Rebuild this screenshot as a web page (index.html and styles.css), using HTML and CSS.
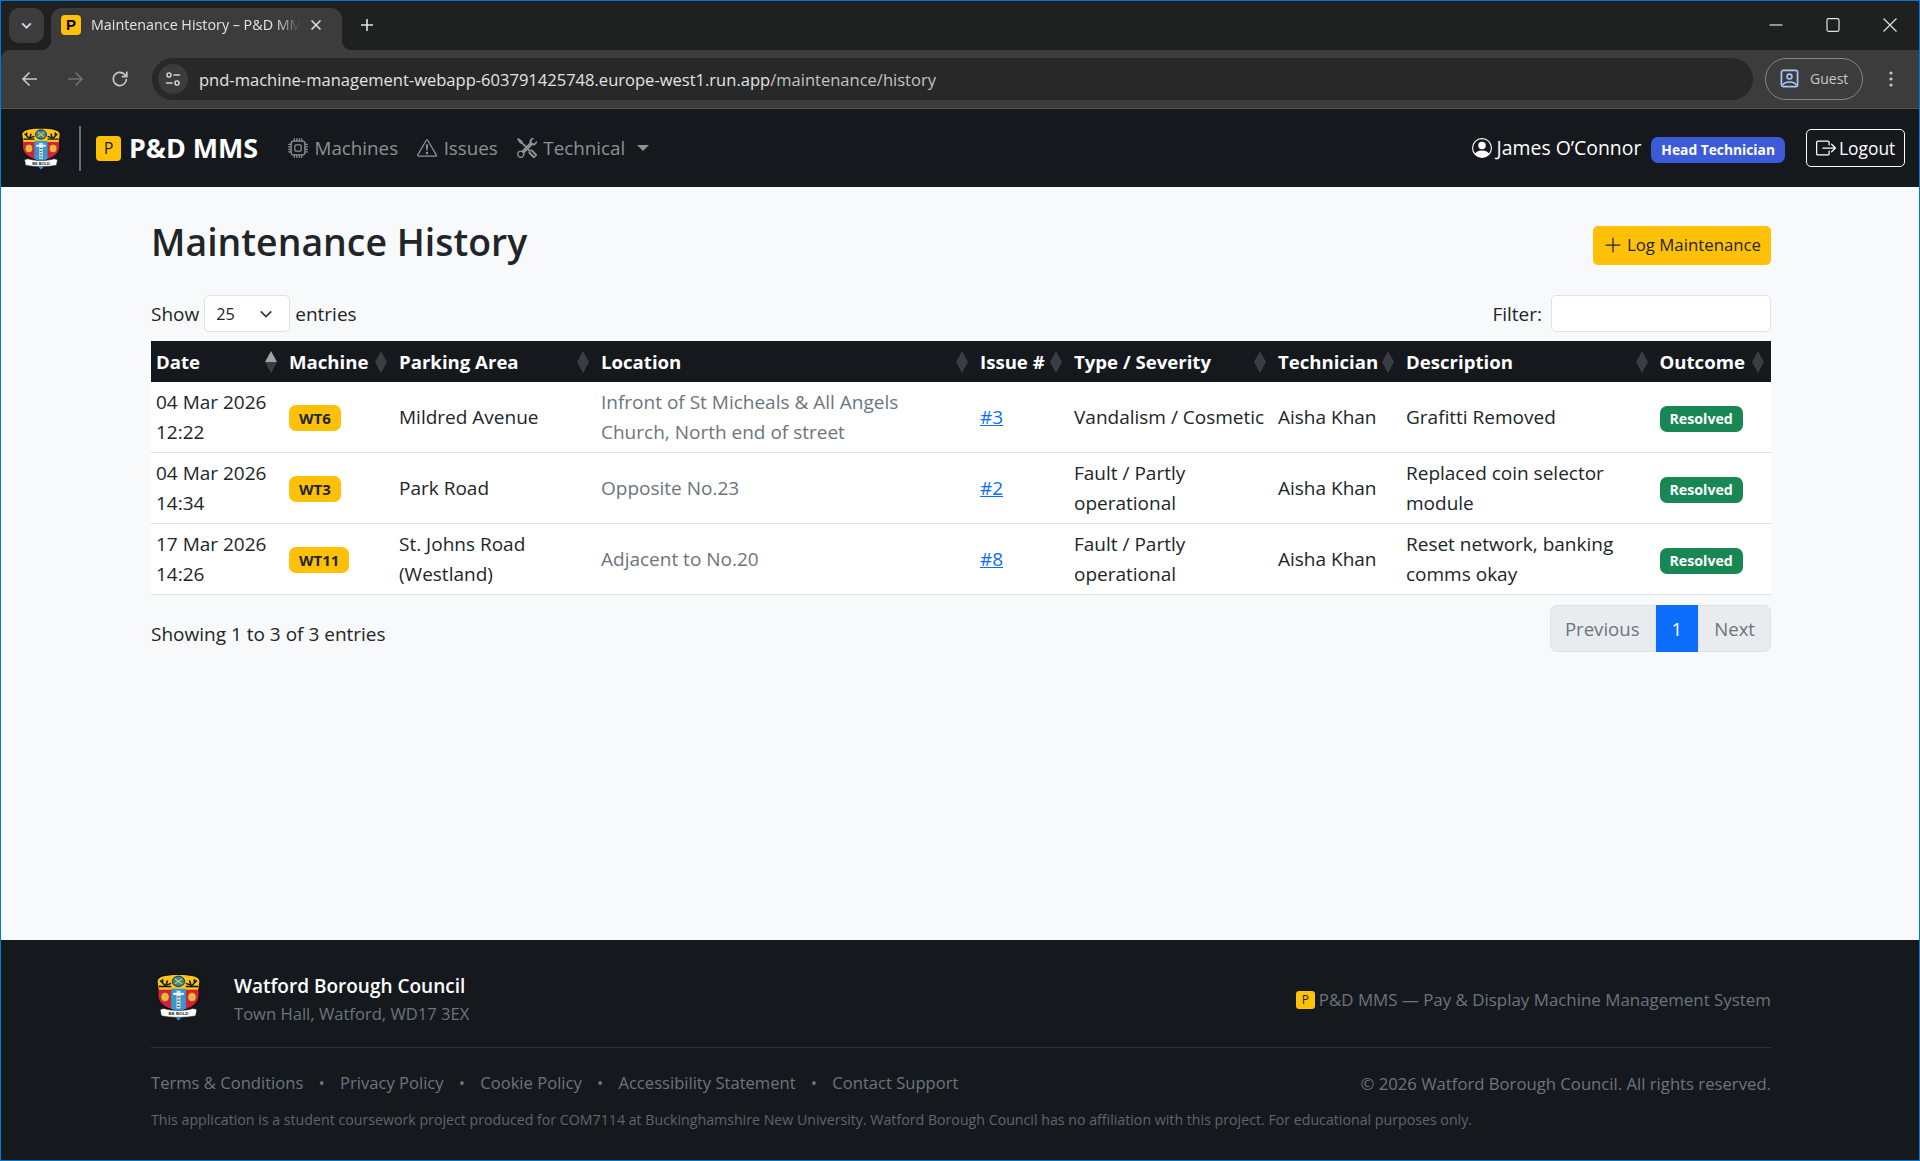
FILE: index.html
```html
<!DOCTYPE html>
<html lang="en">
<head>
    <meta charset="UTF-8">
    <meta name="viewport" content="width=device-width, initial-scale=1.0">
    <title>Maintenance History – P&amp;D MMS</title>
    <link rel="stylesheet" href="styles.css">
</head>
<body>
    <!-- Icon sprite -->
    <svg class="sprite" aria-hidden="true">
        <symbol id="i-cpu" viewBox="0 0 16 16"><path d="M5 0a.5.5 0 0 1 .5.5V2h1V.5a.5.5 0 0 1 1 0V2h1V.5a.5.5 0 0 1 1 0V2h1V.5a.5.5 0 0 1 1 0V2A2.5 2.5 0 0 1 14 4.5h1.5a.5.5 0 0 1 0 1H14v1h1.5a.5.5 0 0 1 0 1H14v1h1.5a.5.5 0 0 1 0 1H14v1h1.5a.5.5 0 0 1 0 1H14a2.5 2.5 0 0 1-2.5 2.5v1.5a.5.5 0 0 1-1 0V14h-1v1.5a.5.5 0 0 1-1 0V14h-1v1.5a.5.5 0 0 1-1 0V14h-1v1.5a.5.5 0 0 1-1 0V14A2.5 2.5 0 0 1 2 11.5H.5a.5.5 0 0 1 0-1H2v-1H.5a.5.5 0 0 1 0-1H2v-1H.5a.5.5 0 0 1 0-1H2v-1H.5a.5.5 0 0 1 0-1H2A2.5 2.5 0 0 1 4.5 2V.5A.5.5 0 0 1 5 0m-.5 3A1.5 1.5 0 0 0 3 4.5v7A1.5 1.5 0 0 0 4.5 13h7a1.5 1.5 0 0 0 1.5-1.5v-7A1.5 1.5 0 0 0 11.5 3zM5 6.5A1.5 1.5 0 0 1 6.5 5h3A1.5 1.5 0 0 1 11 6.5v3A1.5 1.5 0 0 1 9.5 11h-3A1.5 1.5 0 0 1 5 9.5zM6.5 6a.5.5 0 0 0-.5.5v3a.5.5 0 0 0 .5.5h3a.5.5 0 0 0 .5-.5v-3a.5.5 0 0 0-.5-.5z"/></symbol>
        <symbol id="i-warn" viewBox="0 0 16 16"><path d="M7.938 2.016A.13.13 0 0 1 8.002 2a.13.13 0 0 1 .063.016.15.15 0 0 1 .054.057l6.857 11.667c.036.06.035.124.002.183a.2.2 0 0 1-.054.06.1.1 0 0 1-.066.017H1.146a.1.1 0 0 1-.066-.017.2.2 0 0 1-.054-.06.18.18 0 0 1 .002-.183L7.884 2.073a.15.15 0 0 1 .054-.057m1.044-.45a1.13 1.13 0 0 0-1.96 0L.165 13.233c-.457.778.091 1.767.98 1.767h13.713c.889 0 1.438-.99.98-1.767z"/><path d="M7.002 12a1 1 0 1 1 2 0 1 1 0 0 1-2 0M7.1 5.995a.905.905 0 1 1 1.8 0l-.35 3.507a.552.552 0 0 1-1.1 0z"/></symbol>
        <symbol id="i-tools" viewBox="0 0 16 16"><path d="M1 0 0 1l2.2 3.081a1 1 0 0 0 .815.419h.07a1 1 0 0 1 .708.293l2.675 2.675-2.617 2.654A3.003 3.003 0 0 0 0 13a3 3 0 1 0 5.878-.851l2.654-2.617.968.968-.305.914a1 1 0 0 0 .242 1.023l3.27 3.27a.997.997 0 0 0 1.414 0l1.586-1.586a.997.997 0 0 0 0-1.414l-3.27-3.27a1 1 0 0 0-1.023-.242L10.5 9.5l-.96-.96 2.68-2.643A3.005 3.005 0 0 0 16 3q0-.405-.102-.777l-2.14 2.141L12 4l-.364-1.757L13.777.102a3 3 0 0 0-3.675 3.68L7.462 6.46 4.793 3.793a1 1 0 0 1-.293-.707v-.071a1 1 0 0 0-.419-.814zm9.646 10.646a.5.5 0 0 1 .708 0l2.914 2.915a.5.5 0 0 1-.707.707l-2.915-2.914a.5.5 0 0 1 0-.708M3 11l.471.242.529.026.287.445.445.287.026.529L5 13l-.242.471-.026.529-.445.287-.287.445-.529.026L3 15l-.471-.242L2 14.732l-.287-.445L1.268 14l-.026-.529L1 13l.242-.471.026-.529.445-.287.287-.445.529-.026z"/></symbol>
        <symbol id="i-person" viewBox="0 0 16 16"><path d="M11 6a3 3 0 1 1-6 0 3 3 0 0 1 6 0"/><path fill-rule="evenodd" d="M0 8a8 8 0 1 1 16 0A8 8 0 0 1 0 8m8-7a7 7 0 0 0-5.468 11.37C3.242 11.226 4.805 10 8 10s4.757 1.225 5.468 2.37A7 7 0 0 0 8 1"/></symbol>
        <symbol id="i-logout" viewBox="0 0 16 16"><path fill-rule="evenodd" d="M10 12.5a.5.5 0 0 1-.5.5h-8a.5.5 0 0 1-.5-.5v-9a.5.5 0 0 1 .5-.5h8a.5.5 0 0 1 .5.5v2a.5.5 0 0 0 1 0v-2A1.5 1.5 0 0 0 9.5 2h-8A1.5 1.5 0 0 0 0 3.5v9A1.5 1.5 0 0 0 1.5 14h8a1.5 1.5 0 0 0 1.5-1.5v-2a.5.5 0 0 0-1 0z"/><path fill-rule="evenodd" d="M15.854 8.354a.5.5 0 0 0 0-.708l-3-3a.5.5 0 0 0-.708.708L14.293 7.5H5.5a.5.5 0 0 0 0 1h8.793l-2.147 2.146a.5.5 0 0 0 .708.708z"/></symbol>
        <symbol id="i-plus" viewBox="0 0 16 16"><path fill-rule="evenodd" d="M8 2a.5.5 0 0 1 .5.5v5h5a.5.5 0 0 1 0 1h-5v5a.5.5 0 0 1-1 0v-5h-5a.5.5 0 0 1 0-1h5v-5A.5.5 0 0 1 8 2"/></symbol>
        <symbol id="i-crest" viewBox="0 0 40 46" preserveAspectRatio="none">
            <path d="M2 7 C2 3 6 1 20 1 C34 1 38 3 38 7 L38 21 C38 29 33 34 20 38 C7 34 2 29 2 21 Z" fill="#111"/>
            <path d="M3 8 C3 4 8 2 20 2 C32 2 37 4 37 8 L36 17 L4 17 Z" fill="#f6c61c"/>
            <path d="M3.6 16 L36.4 16 L36.4 22 C36 29 31 33 20 36.6 C9 33 4 29 3.6 22 Z" fill="#d81e3f"/>
            <path d="M14 15 H26 V34 C24 35.5 22 36 20 36.6 C18 36 16 35.5 14 34 Z" fill="#2f9bd0"/>
            <circle cx="20" cy="8" r="5" fill="#2f86b8" stroke="#111" stroke-width=".7"/>
            <path d="M17 5.5 L23 10.5 M23 5.5 L17 10.5" stroke="#f6c61c" stroke-width="1"/>
            <path d="M5 7 L9 12 L14 10 M7 6 L7 9 M11 7 L10 11 M35 7 L31 12 L26 10 M33 6 L33 9 M29 7 L30 11" stroke="#111" stroke-width="1.3" fill="none"/>
            <path d="M4 13 L14 13 M26 13 L36 13" stroke="#111" stroke-width="1.5"/>
            <ellipse cx="9" cy="23" rx="3.4" ry="4.4" fill="#f0b63a" stroke="#7c4a12" stroke-width=".5"/>
            <ellipse cx="31" cy="23" rx="3.4" ry="4.4" fill="#f0b63a" stroke="#7c4a12" stroke-width=".5"/>
            <path d="M18.4 17 H21.6 V34 H18.4 Z" fill="#dfe6ea"/>
            <path d="M15.6 19 H24.4 V21 H15.6 Z" fill="#f4f6f7"/>
            <path d="M18.9 23 H21.1 M18.9 26 H21.1 M18.9 29 H21.1 M18.9 32 H21.1" stroke="#333" stroke-width=".8"/>
            <path d="M5 35 L8 34 C14 36.5 26 36.5 32 34 L35 35 L34 41 C26 43 14 43 6 41 Z" fill="#fff" stroke="#222" stroke-width=".5"/>
            <text x="20" y="40.4" class="crest-motto">BE BOLD</text>
            <path d="M17.5 42.5 H22.5 L20 45.5 Z" fill="#2f9bd0"/>
        </symbol>
    </svg>

    <!-- Browser window frame -->
    <div class="browser-frame">
        <div class="tab-strip">
            <div class="tab-list-btn">
                <svg class="chrome-icon-sm" viewBox="0 0 12 12"><path d="M2 4 L6 8 L10 4" fill="none" stroke="#c5d6f5" stroke-width="1.8"/></svg>
            </div>
            <div class="tab">
                <span class="favicon">P</span>
                <span class="tab-title">Maintenance History – P&amp;D MMS</span>
                <svg class="tab-close" viewBox="0 0 12 12"><path d="M1.5 1.5 L10.5 10.5 M10.5 1.5 L1.5 10.5" stroke="#e3e3e3" stroke-width="1.5"/></svg>
            </div>
            <svg class="new-tab" viewBox="0 0 14 14"><path d="M7 1 V13 M1 7 H13" stroke="#e3e3e3" stroke-width="1.6"/></svg>
            <div class="window-controls">
                <svg viewBox="0 0 14 14"><path d="M0.5 7 H13.5" stroke="#e3e3e3" stroke-width="1.2"/></svg>
                <svg viewBox="0 0 14 14"><rect x="1" y="0.7" width="12" height="12.6" rx="1.5" fill="none" stroke="#e3e3e3" stroke-width="1.2"/></svg>
                <svg viewBox="0 0 14 14"><path d="M0.5 0.5 L13.5 13.5 M13.5 0.5 L0.5 13.5" stroke="#e3e3e3" stroke-width="1.2"/></svg>
            </div>
        </div>
        <div class="toolbar">
            <svg class="tool-btn back" viewBox="0 0 20 20"><path d="M17 10 H3.5 M9.5 3.5 L3 10 L9.5 16.5" fill="none" stroke="#c7c7c7" stroke-width="1.7"/></svg>
            <svg class="tool-btn forward" viewBox="0 0 20 20"><path d="M3 10 H16.5 M10.5 3.5 L17 10 L10.5 16.5" fill="none" stroke="#6f6f6f" stroke-width="1.7"/></svg>
            <svg class="tool-btn reload" viewBox="0 0 20 20"><path d="M16.4 10 A6.6 6.6 0 1 1 14.4 5.2 L16.6 7.4 M16.8 2.6 V7.6 H11.8" fill="none" stroke="#c7c7c7" stroke-width="1.7"/></svg>
            <div class="address-bar">
                <span class="site-info">
                    <svg viewBox="0 0 18 18"><circle cx="4.5" cy="4.5" r="2.3" fill="none" stroke="#e3e3e3" stroke-width="1.5"/><path d="M9.5 4.5 H17" stroke="#e3e3e3" stroke-width="1.5"/><circle cx="13.5" cy="13.5" r="2.3" fill="none" stroke="#e3e3e3" stroke-width="1.5"/><path d="M1 13.5 H8.5" stroke="#e3e3e3" stroke-width="1.5"/></svg>
                </span>
                <span class="url">pnd-machine-management-webapp-603791425748.europe-west1.run.app<span class="url-path">/maintenance/history</span></span>
            </div>
            <div class="guest-pill">
                <svg viewBox="0 0 20 20"><rect x="1.5" y="1.5" width="17" height="17" rx="2" fill="none" stroke="#a8c7fa" stroke-width="1.8"/><circle cx="10" cy="8" r="2.6" fill="none" stroke="#a8c7fa" stroke-width="1.6"/><path d="M3 17 C4.5 12.5 15.5 12.5 17 17" fill="none" stroke="#a8c7fa" stroke-width="1.6"/></svg>
                <span>Guest</span>
            </div>
            <svg class="kebab" viewBox="0 0 4 16"><circle cx="2" cy="2" r="1.6" fill="#c7c7c7"/><circle cx="2" cy="8" r="1.6" fill="#c7c7c7"/><circle cx="2" cy="14" r="1.6" fill="#c7c7c7"/></svg>
        </div>
    </div>

    <!-- Menu de navegacion -->
    <nav class="navbar">
        <svg class="crest-nav"><use href="#i-crest"/></svg>
        <span class="nav-divider"></span>
        <span class="p-mark">P</span>
        <span class="brand-name">P&amp;D MMS</span>
        <div class="nav-links">
            <a href="#" class="nav-link"><svg class="icon"><use href="#i-cpu"/></svg>Machines</a>
            <a href="#" class="nav-link"><svg class="icon"><use href="#i-warn"/></svg>Issues</a>
            <a href="#" class="nav-link"><svg class="icon"><use href="#i-tools"/></svg>Technical<span class="caret"></span></a>
        </div>
        <div class="nav-user">
            <svg class="icon"><use href="#i-person"/></svg>
            <span class="user-name">James O’Connor</span>
            <span class="badge badge-role">Head Technician</span>
            <a href="#" class="btn-logout"><svg class="icon"><use href="#i-logout"/></svg>Logout</a>
        </div>
    </nav>

    <main class="content">
        <div class="page-head">
            <h1>Maintenance History</h1>
            <a href="#" class="btn-log"><svg class="icon"><use href="#i-plus"/></svg>Log Maintenance</a>
        </div>

        <div class="table-controls">
            <label class="length">Show
                <select class="length-select"><option>25</option></select>
                entries</label>
            <label class="filter">Filter:
                <input type="search" class="filter-input">
            </label>
        </div>

        <table class="history">
            <colgroup>
                <col class="c-date"><col class="c-machine"><col class="c-area"><col class="c-location"><col class="c-issue"><col class="c-type"><col class="c-tech"><col class="c-desc"><col class="c-outcome">
            </colgroup>
            <thead>
                <tr>
                    <th class="sorted">Date</th>
                    <th>Machine</th>
                    <th>Parking Area</th>
                    <th>Location</th>
                    <th>Issue #</th>
                    <th>Type / Severity</th>
                    <th>Technician</th>
                    <th>Description</th>
                    <th>Outcome</th>
                </tr>
            </thead>
            <tbody>
                <tr>
                    <td>04 Mar 2026<br>12:22</td>
                    <td><span class="badge badge-machine">WT6</span></td>
                    <td>Mildred Avenue</td>
                    <td class="muted">Infront of St Micheals &amp; All Angels Church, North end of street</td>
                    <td><a href="#">#3</a></td>
                    <td>Vandalism / Cosmetic</td>
                    <td>Aisha Khan</td>
                    <td>Grafitti Removed</td>
                    <td><span class="badge badge-ok">Resolved</span></td>
                </tr>
                <tr>
                    <td>04 Mar 2026<br>14:34</td>
                    <td><span class="badge badge-machine">WT3</span></td>
                    <td>Park Road</td>
                    <td class="muted">Opposite No.23</td>
                    <td><a href="#">#2</a></td>
                    <td>Fault / Partly operational</td>
                    <td>Aisha Khan</td>
                    <td>Replaced coin selector module</td>
                    <td><span class="badge badge-ok">Resolved</span></td>
                </tr>
                <tr>
                    <td>17 Mar 2026<br>14:26</td>
                    <td><span class="badge badge-machine">WT11</span></td>
                    <td>St. Johns Road (Westland)</td>
                    <td class="muted">Adjacent to No.20</td>
                    <td><a href="#">#8</a></td>
                    <td>Fault / Partly operational</td>
                    <td>Aisha Khan</td>
                    <td>Reset network, banking comms okay</td>
                    <td><span class="badge badge-ok">Resolved</span></td>
                </tr>
            </tbody>
        </table>

        <div class="table-foot">
            <div class="info">Showing 1 to 3 of 3 entries</div>
            <div class="pagination">
                <a href="#" class="page">Previous</a>
                <a href="#" class="page active">1</a>
                <a href="#" class="page">Next</a>
            </div>
        </div>
    </main>

    <footer class="site-footer">
        <div class="footer-top">
            <div class="council">
                <svg class="crest-foot"><use href="#i-crest"/></svg>
                <div class="council-text">
                    <div class="council-name">Watford Borough Council</div>
                    <div class="council-addr">Town Hall, Watford, WD17 3EX</div>
                </div>
            </div>
            <div class="system-name"><span class="p-mark-sm">P</span>P&amp;D MMS — Pay &amp; Display Machine Management System</div>
        </div>
        <div class="footer-links-row">
            <div class="footer-links">
                <a href="#">Terms &amp; Conditions</a>
                <span class="dot">•</span>
                <a href="#">Privacy Policy</a>
                <span class="dot">•</span>
                <a href="#">Cookie Policy</a>
                <span class="dot">•</span>
                <a href="#">Accessibility Statement</a>
                <span class="dot">•</span>
                <a href="#">Contact Support</a>
            </div>
            <div class="copyright">© 2026 Watford Borough Council. All rights reserved.</div>
        </div>
        <p class="disclaimer">This application is a student coursework project produced for COM7114 at Buckinghamshire New University. Watford Borough Council has no affiliation with this project. For educational purposes only.</p>
    </footer>
</body>
</html>
```

FILE: styles.css
```css
/* Base */
* {
    box-sizing: border-box;
}

html, body {
    height: 100%;
}

body {
    margin: 0;
    height: 100vh;
    overflow: hidden;
    display: flex;
    flex-direction: column;
    border: 1px solid #0078d4;
    font-family: "Open Sans", "Noto Sans", sans-serif;
    font-size: 19px;
    line-height: 30px;
    color: #212529;
    background-color: #f8f9fa;
}

a {
    text-decoration: none;
}

.sprite {
    display: none;
}

.icon {
    width: 20px;
    height: 20px;
    fill: currentColor;
    flex: none;
}

.crest-motto {
    font-family: "Liberation Sans", sans-serif;
    font-size: 3.6px;
    font-weight: 700;
    text-anchor: middle;
    fill: #222;
}

/* Browser frame */
.browser-frame {
    flex: none;
    background-color: #1f2020;
}

.tab-strip {
    height: 49px;
    display: flex;
    align-items: flex-start;
    padding-left: 8px;
}

.tab-list-btn {
    width: 35px;
    height: 35px;
    margin-top: 7px;
    border-radius: 10px;
    background-color: #3c3c3c;
    display: flex;
    align-items: center;
    justify-content: center;
}

.chrome-icon-sm {
    width: 13px;
    height: 13px;
}

.tab {
    position: relative;
    width: 291px;
    height: 42px;
    margin: 7px 0 0 7px;
    padding: 7px 0 0 10px;
    display: flex;
    align-items: flex-start;
    background-color: #3c3c3c;
    border-radius: 11px 11px 0 0;
}

.tab::before,
.tab::after {
    content: "";
    position: absolute;
    bottom: 0;
    width: 10px;
    height: 10px;
}

.tab::before {
    left: -10px;
    background: radial-gradient(circle at 0 0, transparent 10px, #3c3c3c 10.5px);
}

.tab::after {
    right: -10px;
    background: radial-gradient(circle at 100% 0, transparent 10px, #3c3c3c 10.5px);
}

.favicon {
    width: 20px;
    height: 20px;
    flex: none;
    border-radius: 4px;
    background-color: #ffc107;
    color: #000;
    font-family: "Liberation Sans", sans-serif;
    font-size: 15px;
    font-weight: 700;
    line-height: 20px;
    text-align: center;
}

.tab-title {
    width: 210px;
    margin-left: 10px;
    overflow: hidden;
    white-space: nowrap;
    font-size: 14.3px;
    line-height: 20px;
    color: #e3e3e3;
    -webkit-mask-image: linear-gradient(to right, #000 88%, transparent 100%);
    mask-image: linear-gradient(to right, #000 88%, transparent 100%);
}

.tab-close {
    width: 12px;
    height: 12px;
    margin: 4px 0 0 9px;
}

.new-tab {
    width: 14px;
    height: 14px;
    margin: 17px 0 0 18px;
}

.window-controls {
    margin-left: auto;
    margin-right: 22px;
    margin-top: 17px;
    display: flex;
    gap: 43px;
}

.window-controls svg {
    width: 14px;
    height: 14px;
}

.toolbar {
    height: 59px;
    display: flex;
    align-items: center;
    padding-bottom: 1px;
    background-color: #3c3c3c;
    border-bottom: 1px solid #555;
    border-top-left-radius: 9px;
}

.tool-btn {
    width: 20px;
    height: 20px;
    flex: none;
}

.back {
    margin-left: 19px;
}

.forward {
    margin-left: 25px;
}

.reload {
    margin-left: 25px;
}

.address-bar {
    width: 1601px;
    height: 42px;
    margin-left: 22px;
    display: flex;
    align-items: center;
    border-radius: 21px;
    background-color: #282828;
}

.site-info {
    width: 30px;
    height: 30px;
    margin-left: 6px;
    border-radius: 50%;
    background-color: #3c3c3c;
    display: flex;
    align-items: center;
    justify-content: center;
}

.site-info svg {
    width: 16px;
    height: 16px;
}

.url {
    margin-left: 11px;
    padding-top: 2px;
    font-size: 16.55px;
    white-space: nowrap;
    color: #e3e3e3;
}

.url-path {
    color: #c2c2c2;
}

.guest-pill {
    width: 98px;
    height: 42px;
    margin-left: 12px;
    display: flex;
    align-items: center;
    padding-left: 14px;
    gap: 11px;
    border: 1.5px solid #858585;
    border-radius: 21px;
    font-size: 14px;
    color: #c7c7c7;
}

.guest-pill svg {
    width: 19px;
    height: 21px;
}

.kebab {
    width: 4px;
    height: 16px;
    margin-left: 26px;
}

/* Navbar */
.navbar {
    height: 78px;
    flex: none;
    display: flex;
    align-items: center;
    padding-left: 18px;
    padding-right: 14px;
    background-color: #15191e;
    color: #fff;
}

.crest-nav {
    width: 44px;
    height: 43px;
    flex: none;
}

.nav-divider {
    width: 2px;
    height: 45px;
    margin-left: 16px;
    background-color: #6a6c6f;
}

.p-mark {
    width: 25px;
    height: 25px;
    margin-left: 15px;
    border-radius: 4px;
    background-color: #ffc107;
    color: #212529;
    font-size: 16px;
    line-height: 25px;
    text-align: center;
}

.brand-name {
    margin-left: 8px;
    font-size: 26.8px;
    font-weight: 700;
    white-space: nowrap;
}

.nav-links {
    margin-left: 30px;
    display: flex;
    gap: 19px;
    font-size: 18.8px;
}

.nav-link {
    display: flex;
    align-items: center;
    gap: 6.5px;
    color: #8f9193;
    white-space: nowrap;
}

.caret {
    width: 0;
    height: 0;
    margin-left: 5px;
    border-top: 6px solid #8f9193;
    border-left: 6px solid transparent;
    border-right: 6px solid transparent;
}

.nav-user {
    margin-left: auto;
    display: flex;
    align-items: center;
}

.user-name {
    margin-left: 5px;
    font-size: 19.4px;
    white-space: nowrap;
}

.badge {
    display: inline-block;
    padding: 5px 10px;
    border-radius: 7px;
    font-size: 14.2px;
    font-weight: 700;
    line-height: 16px;
    white-space: nowrap;
}

.badge-role {
    margin: 4px 0 0 10px;
    font-size: 13.8px;
    background-color: #3d5bd9;
    color: #fff;
}

.btn-logout {
    width: 99px;
    height: 38px;
    margin-left: 21px;
    padding: 0 9px;
    display: flex;
    align-items: center;
    gap: 3px;
    border: 1px solid #fff;
    border-radius: 5px;
    color: #fff;
    font-size: 17.4px;
}

/* Content */
.content {
    flex: 1;
    padding-left: 150px;
    width: 1770px;
}

.page-head {
    height: 48px;
    margin-top: 32px;
    display: flex;
    align-items: center;
    justify-content: space-between;
}

h1 {
    margin: 0 0 2px;
    font-size: 37.4px;
    font-weight: 600;
    line-height: 46px;
    white-space: nowrap;
}

.btn-log {
    height: 39px;
    margin-top: 4px;
    padding: 0 10px;
    display: flex;
    align-items: center;
    gap: 4px;
    border-radius: 5px;
    background-color: #ffc107;
    color: #212529;
    font-size: 16.8px;
}

.table-controls {
    height: 37px;
    margin-top: 28px;
    margin-bottom: 9px;
    display: flex;
    align-items: center;
    justify-content: space-between;
}

.length, .filter {
    display: flex;
    align-items: center;
    gap: 5px;
}

.filter {
    gap: 9px;
}

.length-select {
    width: 86px;
    height: 37px;
    padding-left: 11px;
    appearance: none;
    border: 1px solid #dee2e6;
    border-radius: 5px;
    background-color: #fff;
    background-image: url("data:image/svg+xml,%3csvg xmlns='http://www.w3.org/2000/svg' viewBox='0 0 16 16'%3e%3cpath fill='none' stroke='%23343a40' stroke-width='2' d='m2 5 6 6 6-6'/%3e%3c/svg%3e");
    background-repeat: no-repeat;
    background-position: right 14px center;
    background-size: 18px 14px;
    font-family: inherit;
    font-size: 16.2px;
    color: #212529;
}

.filter-input {
    width: 220px;
    height: 37px;
    border: 1px solid #dee2e6;
    border-radius: 5px;
    background-color: #fff;
}

/* Tabla */
.history {
    width: 1620px;
    table-layout: fixed;
    border-collapse: separate;
    border-spacing: 0;
    background-color: #fff;
}

.c-date { width: 133px; }
.c-machine { width: 110px; }
.c-area { width: 202px; }
.c-location { width: 379px; }
.c-issue { width: 94px; }
.c-type { width: 204px; }
.c-tech { width: 128px; }
.c-desc { width: 253.5px; }
.c-outcome { width: 116.5px; }

.history th {
    position: relative;
    height: 41px;
    padding: 5px;
    background-color: #15191e;
    color: #fff;
    font-size: 18.6px;
    font-weight: 700;
    text-align: left;
    white-space: nowrap;
}

/* Flechas de ordenacion sobre la cabecera */
.history th::before,
.history th::after {
    content: "";
    position: absolute;
    right: 7px;
    width: 0;
    height: 0;
    border-left: 6.5px solid transparent;
    border-right: 6.5px solid transparent;
}

.history th::before {
    top: 10px;
    border-bottom: 11px solid #3a3d41;
}

.history th::after {
    top: 21px;
    border-top: 11px solid #3a3d41;
}

.history th.sorted::before {
    border-bottom-color: #a2a3a5;
}

.history td {
    height: 70.7px;
    padding: 5px;
    border-bottom: 1px solid #dee2e6;
    vertical-align: middle;
}

.history td a {
    color: #0d6efd;
    text-decoration: underline;
}

.muted {
    color: #6c757d;
}

.badge-machine {
    font-size: 15px;
    background-color: #ffc107;
    color: #212529;
}

.badge-ok {
    background-color: #198754;
    color: #fff;
}

.table-foot {
    margin-top: 10px;
    display: flex;
    align-items: flex-start;
    justify-content: space-between;
}

.info {
    padding-top: 14px;
}

.pagination {
    height: 47px;
    display: flex;
    font-size: 18.6px;
}

.page {
    padding: 0 15px;
    display: flex;
    align-items: center;
    background-color: #e9ecef;
    border: 1px solid #dee2e6;
    color: #6c757d;
}

.page:first-child {
    padding-left: 14px;
    border-radius: 7px 0 0 7px;
}

.page:last-child {
    border-radius: 0 7px 7px 0;
}

.page.active {
    background-color: #0d6efd;
    border-color: #0d6efd;
    color: #fff;
}

/* Footer */
.site-footer {
    height: 220px;
    flex: none;
    padding: 33px 148px 0 150px;
    background-color: #15191e;
    color: #6c757d;
    font-size: 16.6px;
}

.footer-top {
    height: 75px;
    display: flex;
    align-items: flex-start;
    justify-content: space-between;
    border-bottom: 1px solid #2e3236;
}

.council {
    display: flex;
    padding-left: 3px;
    gap: 31px;
}

.crest-foot {
    width: 49px;
    height: 48px;
    flex: none;
}

.council-text {
    margin-top: -1px;
}

.council-name {
    font-size: 19px;
    font-weight: 600;
    line-height: 28px;
    color: #fff;
}

.council-addr {
    line-height: 28px;
}

.system-name {
    margin-top: 12px;
    display: flex;
    align-items: center;
    font-size: 16.9px;
}

.p-mark-sm {
    width: 19px;
    height: 18px;
    margin-right: 4px;
    border-radius: 3px;
    background-color: #ffc107;
    color: #212529;
    font-size: 12px;
    line-height: 18px;
    text-align: center;
}

.footer-links-row {
    margin-top: 20px;
    display: flex;
    justify-content: space-between;
}

.footer-links {
    display: flex;
    gap: 15.2px;
}

.footer-links a {
    color: #6c757d;
}

.copyright {
    padding-top: 1px;
    font-size: 16.7px;
}

.disclaimer {
    margin: 6px 0 0;
    font-size: 14.2px;
    color: #5f666c;
    white-space: nowrap;
}
```
